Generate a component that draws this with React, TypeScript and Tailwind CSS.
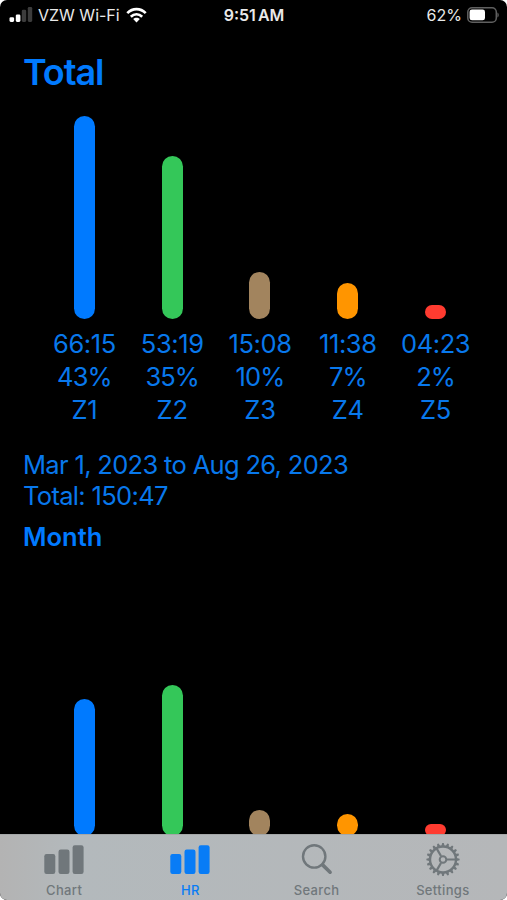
import type { ReactNode } from "react";

type Zone = { name: string; time: string; share: string; total: number; month: number; color: string };

const zones: Zone[] = [
  { name: "Z1", time: "66:15", share: "43%", total: 203, month: 137, color: "bg-[#007aff]" },
  { name: "Z2", time: "53:19", share: "35%", total: 163, month: 151, color: "bg-[#34c759]" },
  { name: "Z3", time: "15:08", share: "10%", total: 47, month: 25.5, color: "bg-[#a2845e]" },
  { name: "Z4", time: "11:38", share: "7%", total: 36.5, month: 22, color: "bg-[#ff9500]" },
  { name: "Z5", time: "04:23", share: "2%", total: 14, month: 11.5, color: "bg-[#ff3b30]" },
];

function Bars({ field }: { field: "total" | "month" }) {
  return (
    <div className="grid h-full grid-cols-5 items-end justify-items-center">
      {zones.map((z) => (
        <div key={z.name} className={`w-[21px] rounded-full ${z.color}`} style={{ height: z[field] }} />
      ))}
    </div>
  );
}

function StatusBar() {
  return (
    <header className="grid h-[30px] grid-cols-3 items-center pr-[8px] pl-[9px] text-[16px] leading-none text-[#e9e9e9]">
      <div className="flex items-center">
        <svg width="24" height="16" viewBox="0 0 24 16">
          <rect x="0.5" y="10.3" width="4.6" height="4.6" rx="1.3" fill="#fff" />
          <rect x="6.8" y="7.4" width="4.6" height="7.5" rx="1.3" fill="#fff" />
          <rect x="12.8" y="2.8" width="4.4" height="12.1" rx="1.3" fill="#3c3c3c" />
          <rect x="18.8" y="0" width="4.4" height="14.9" rx="1.3" fill="#3c3c3c" />
        </svg>
        <span className="ml-[5px] whitespace-nowrap tracking-[0px]">VZW Wi-Fi</span>
        <svg className="ml-[6px]" width="21" height="16" viewBox="0 0 21 16" fill="none" stroke="#fff" strokeWidth="2.7">
          <path d="M1.3 6.1C6.5 0.8 14.5 0.8 19.7 6.1" />
          <path d="M4.8 9.7C8.2 6.5 12.8 6.5 16.2 9.7" />
          <path d="M7.2 12.1C9.1 10.2 11.9 10.2 13.8 12.1L10.5 15.5Z" fill="#fff" stroke="none" />
        </svg>
      </div>
      <div className="text-center font-semibold whitespace-nowrap">9:51<span className="ml-[2px]">AM</span></div>
      <div className="flex items-center justify-end">
        <span>62%</span>
        <svg className="ml-[5px]" width="32" height="17" viewBox="0 0 32 17">
          <rect x="0.8" y="0" width="28.5" height="14.5" rx="4.3" fill="none" stroke="#606060" strokeWidth="1.5" transform="translate(0 0.8)" />
          <rect x="2.6" y="2.6" width="15.4" height="10.7" rx="2.4" fill="#fff" />
          <path d="M30.4 5.6C32.2 6.4 32.2 9.8 30.4 10.6Z" fill="#606060" />
        </svg>
      </div>
    </header>
  );
}

function BarsIcon() {
  return (
    <svg width="40" height="34" viewBox="0 0 40 34" fill="currentColor">
      <rect x="0.3" y="11" width="11" height="20" rx="2.2" />
      <rect x="14.5" y="6.6" width="11" height="24.4" rx="2.2" />
      <rect x="28.6" y="2.2" width="11" height="28.8" rx="2.2" />
    </svg>
  );
}

function SearchIcon() {
  return (
    <svg width="34" height="34" viewBox="0 0 34 34" fill="none" stroke="currentColor" strokeLinecap="round">
      <circle cx="14.2" cy="13.4" r="11.2" strokeWidth="2.4" />
      <path d="M22.6 21.9L30.1 29.2" strokeWidth="3.6" />
    </svg>
  );
}

function GearIcon() {
  const teeth = Array.from({ length: 20 }, (_, i) => i * 18);
  return (
    <svg width="34" height="34" viewBox="-17 -16.5 34 34" fill="none" stroke="currentColor">
      <circle r="13" strokeWidth="2.4" />
      {teeth.map((a) => (
        <path key={a} d="M13.6 -1.6L16.6 -0.8V0.8L13.6 1.6Z" fill="currentColor" stroke="none" transform={`rotate(${a})`} />
      ))}
      <circle r="3.3" strokeWidth="2" />
      {[0, 120, 240].map((a) => (
        <path key={a} d="M4 0H12.6" strokeWidth="2.2" transform={`rotate(${a})`} />
      ))}
    </svg>
  );
}

function Tab({ label, active, children }: { label: string; active?: boolean; children: ReactNode }) {
  return (
    <div className={`flex flex-col items-center pt-[8px] ${active ? "text-[#087cf6]" : "text-[#70777b]"}`}>
      {children}
      <span className="mt-[5px] text-[13px] leading-[16px] font-medium tracking-[0.35px]">{label}</span>
    </div>
  );
}

export default function App() {
  return (
    <div className="h-[900px] w-[507px] overflow-hidden bg-white font-['Inter','Liberation_Sans',sans-serif]">
      <div className="flex h-full flex-col overflow-hidden rounded-[7px] bg-black">
        <StatusBar />
        <main className="flex min-h-0 flex-1 flex-col overflow-hidden text-[#0878ec]">
          <h1 className="mt-[22px] ml-[23px] h-[40px] text-[36px] leading-[40px] font-semibold tracking-[-1.1px] text-[#007aff]">Total</h1>
          <div className="mt-[24px] mr-[27.5px] ml-[40.5px] h-[203px] shrink-0">
            <Bars field="total" />
          </div>
          <div className="mt-[8px] mr-[27.5px] ml-[40.5px] grid shrink-0 grid-cols-5 text-center text-[25.5px] leading-[33px]">
            {zones.map((z) => (
              <div key={z.name}>
                <div className="tracking-[-0.4px]">{z.time}</div>
                <div className="tracking-[-0.9px]">{z.share}</div>
                <div className="tracking-[-0.2px]">{z.name}</div>
              </div>
            ))}
          </div>
          <div className="mt-[23px] ml-[23px] text-[25.5px] leading-[31px] tracking-[-0.67px] whitespace-nowrap">
            <p>Mar 1, 2023 to Aug 26, 2023</p>
            <p>Total: 150:47</p>
          </div>
          <h2 className="mt-[9px] ml-[23px] text-[25.5px] leading-[33px] font-semibold text-[#007aff]">Month</h2>
          <div className="mt-[129.5px] mr-[27.5px] ml-[40.5px] h-[153px] shrink-0">
            <Bars field="month" />
          </div>
        </main>
        <nav className="grid h-[66px] shrink-0 grid-cols-4 border-t border-[#a4a7a8] bg-linear-to-r from-[#b3b3b3] via-[#b3b9bc] via-15% to-[#b5b7b9] pr-[1px] pl-[1px]">
          <Tab label="Chart"><BarsIcon /></Tab>
          <Tab label="HR" active><BarsIcon /></Tab>
          <Tab label="Search"><SearchIcon /></Tab>
          <Tab label="Settings"><GearIcon /></Tab>
        </nav>
      </div>
    </div>
  );
}
